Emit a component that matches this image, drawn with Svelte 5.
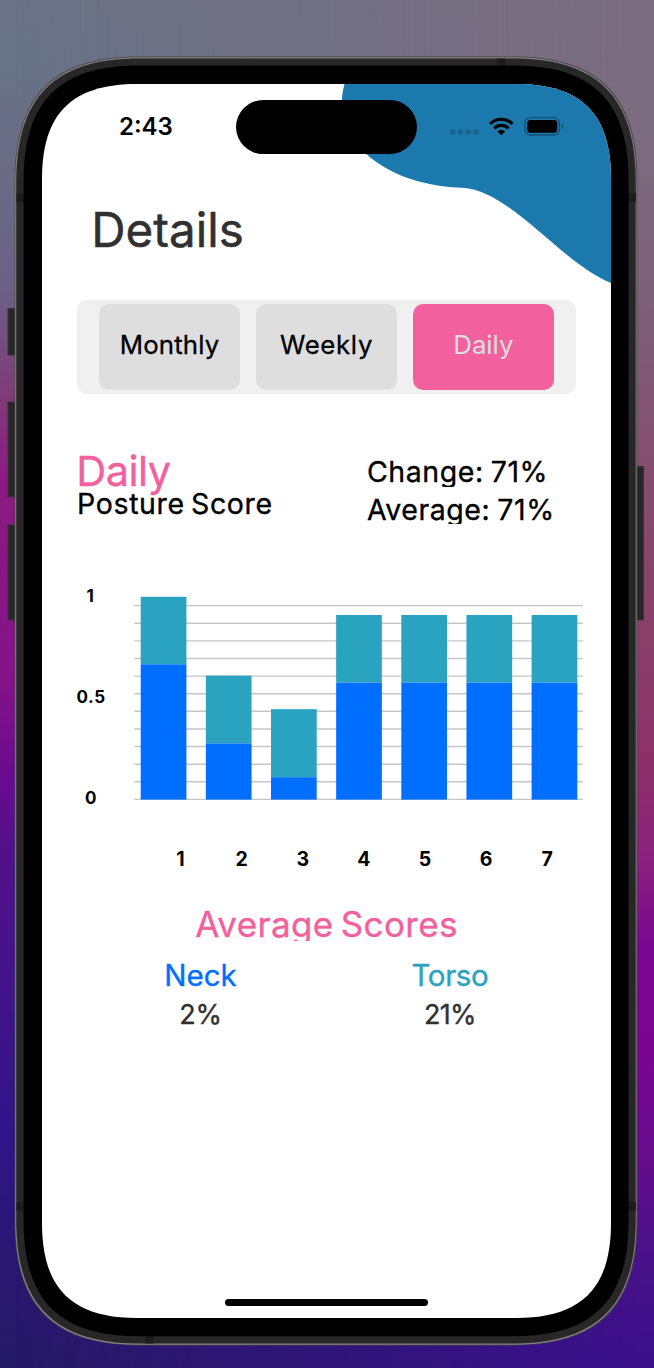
<script>
  const bars = [
    { top: 596.8, split: 664.3 },
    { top: 675.6, split: 743.4 },
    { top: 709.2, split: 777.2 },
    { top: 615, split: 682.6 },
    { top: 615, split: 682.6 },
    { top: 615, split: 682.6 },
    { top: 615, split: 682.6 }
  ];
  const lines = Array.from({ length: 12 }, (_, i) => 605.6 + i * 17.62);
  const tabs = ['Monthly', 'Weekly', 'Daily'];
  let active = $state('Daily');

  // Rounded rectangle with soft, continuous corners that span r pixels of each side.
  function squircle(x0, y0, x1, y1, r) {
    const h = 0.312 * r;
    return `M${x0 + r} ${y0}H${x1 - r}C${x1 - h} ${y0} ${x1} ${y0 + h} ${x1} ${y0 + r}` +
      `V${y1 - r}C${x1} ${y1 - h} ${x1 - h} ${y1} ${x1 - r} ${y1}` +
      `H${x0 + r}C${x0 + h} ${y1} ${x0} ${y1 - h} ${x0} ${y1 - r}` +
      `V${y0 + r}C${x0} ${y0 + h} ${x0 + h} ${y0} ${x0 + r} ${y0}Z`;
  }
</script>

<div class="stage">
  <svg class="device" width="654" height="1368" viewBox="0 0 654 1368" aria-hidden="true">
    <g fill="#272727" stroke="#3c3340" stroke-width="1">
      <rect x="8" y="308.500" width="10" height="46.500" />
      <rect x="8" y="402" width="10" height="95" />
      <rect x="8" y="525" width="10" height="95" />
      <rect x="634" y="466.500" width="9.500" height="153.500" />
    </g>
    <path d={squircle(14.6, 56.4, 637.4, 1345.4, 124)} fill="#44444a" />
    <path d={squircle(15.2, 57.2, 636.6, 1344.8, 124)} fill="#85817f" />
    <path d={squircle(16.3, 58.5, 635.7, 1343.5, 123)} fill="#272727" />
    <g fill="#1c1c1c">
      <rect x="16.500" y="193" width="8" height="9" />
      <rect x="628" y="193" width="8" height="9" />
      <rect x="16.500" y="1202" width="8" height="9" />
      <rect x="628" y="1202" width="8" height="9" />
      <rect x="497" y="58.500" width="9" height="8" />
      <rect x="145" y="1335" width="8.500" height="8.500" />
    </g>
    <path d={squircle(23.6, 65.6, 628.6, 1336.2, 115)} fill="#000" />
    <path d={squircle(42, 84, 611, 1318, 95)} fill="#fff" />
    <clipPath id="screen"><path d={squircle(42, 84, 611, 1318, 95)} /></clipPath>
    <path
      clip-path="url(#screen)"
      d="M344.500 84C337 112 345 135 366.300 154C392 177 427 186.500 463 187.800C511 191 560 262 611 283V84Z"
      fill="#1c79ad"
    />
  </svg>

  <main class="screen">
    <div class="status">
      <span class="time">2:43</span>
      <span class="island"></span>
      <svg class="dots" width="30" height="6" viewBox="0 0 30 6"><g fill="#176490"><rect x="0.300" y="0.500" width="5" height="5" rx="1.500" /><rect x="8.100" y="0.500" width="5" height="5" rx="1.500" /><rect x="15.800" y="0.500" width="5" height="5" rx="1.500" /><rect x="23.500" y="0.500" width="5" height="5" rx="1.500" /></g></svg>
      <svg class="wifi" width="26" height="20" viewBox="488 116 26 20"><g fill="none" stroke="#000" stroke-width="3.200"><path d="M490.100 123.900A15.800 15.800 0 0 1 512.500 123.900" /><path d="M494.200 128.300A10 10 0 0 1 508.400 128.300" /></g><path d="M501.300 135.200L497.500 131.400A5.300 5.300 0 0 1 505.100 131.400Z" /></svg>
      <svg class="battery" width="40" height="20" viewBox="524 116 40 20"><rect x="525" y="117.700" width="34.300" height="17.300" rx="5.200" fill="none" stroke="#125078" stroke-width="1.300" /><rect x="527.200" y="120" width="30" height="12.800" rx="3.400" /><path d="M561.700 123.800C564 124.800 564 127.800 561.700 128.800Z" fill="#125078" /></svg>
    </div>

    <h1>Details</h1>

    <div class="tabs">
      {#each tabs as tab}
        <button class:active={tab === active} class={tab.toLowerCase()} onclick={() => (active = tab)}>{tab}</button>
      {/each}
    </div>

    <section class="summary">
      <div>
        <h2>Daily</h2>
        <p class="sub">Posture Score</p>
      </div>
      <div class="stats">
        <p class="change">Change: 71%</p>
        <p class="average">Average: 71%</p>
      </div>
    </section>

    <svg class="chart" width="530" height="220" viewBox="60 590 530 220">
      {#each lines as y}
        <line x1="134.300" x2="583" y1={y} y2={y} stroke="#c6c6c6" stroke-width="1.400" />
      {/each}
      {#each bars as bar, i}
        <rect x={140.7 + i * 65.15} y={bar.top} width="45.700" height={bar.split - bar.top} fill="#29a3bf" />
        <rect x={140.7 + i * 65.15} y={bar.split} width="45.700" height={799.6 - bar.split} fill="#006fff" />
      {/each}
      <g class="ylabels" text-anchor="middle">
        <text x="90.500" y="601.900">1</text>
        <text x="91" y="703">0.5</text>
        <text x="91" y="804.300">0</text>
      </g>
    </svg>
    <div class="days">
      {#each bars as _, i}<span>{i + 1}</span>{/each}
    </div>

    <h3>Average Scores</h3>
    <div class="scores">
      <div class="neck"><strong>Neck</strong><span>2%</span></div>
      <div class="torso"><strong>Torso</strong><span>21%</span></div>
    </div>

    <div class="home"></div>
  </main>
</div>

<style>
  :global(body) { margin: 0; }
  .stage {
    position: relative;
    width: 654px;
    height: 1368px;
    box-sizing: border-box;
    padding: 84px 43px 50px 42px;
    overflow: hidden;
    font-family: Inter, "Liberation Sans", sans-serif;
    color: #000;
    background: linear-gradient(#6a7385 0, #687386 60px, #6a6c85 170px, #6b6085 290px, #7d3f77 385px, #8b1b80 480px, #86128a 680px, #6a0a90 775px, #50118b 860px, #43138a 980px, #2e1489 1140px, #281870 1270px, #251a66 1368px);
  }
  .stage::before {
    content: "";
    position: absolute;
    inset: 0;
    background: linear-gradient(#7a6c80 0, #7c6b7f 150px, #7d6078 300px, #845070 440px, #8a3f68 640px, #8e3068 760px, #8b207f 860px, #7a0590 950px, #7a0490 1050px, #650c8d 1160px, #4a1189 1250px, #38108a 1368px);
    mask-image: linear-gradient(to right, transparent 15px, #000 640px);
  }
  .device { position: absolute; left: 0; top: 0; }
  .screen {
    position: relative;
    height: 100%;
    box-sizing: border-box;
    padding: 16px 0 12px;
    display: flex;
    flex-direction: column;
  }
  h1, h2, h3, p { margin: 0; font-weight: 400; white-space: nowrap; -webkit-text-stroke: 0.35px currentColor; }

  .status { display: flex; align-items: center; height: 53.500px; flex: none; padding-left: 77px; }
  .time { width: 55px; font-size: 24px; font-weight: 600; white-space: nowrap; }
  .island { width: 181.500px; height: 53.500px; border-radius: 27px; background: #000; margin-left: 61.700px; }
  .dots { margin: 11px 0 0 32.800px; }
  .wifi { margin: 0 0 2px 8px; }
  .battery { margin: 0 0 2px 10px; }

  h1 { margin: 46.200px 0 0 49.300px; line-height: 60px; font-size: 47.500px; color: #303030; -webkit-text-stroke-width: 0.5px; }

  .tabs {
    display: flex;
    flex: none;
    gap: 15.700px;
    box-sizing: border-box;
    width: 499px;
    height: 94px;
    margin: 40.300px 0 0 35px;
    padding: 4px 22px;
    border-radius: 10px;
    background: #f0f0f0;
  }
  button {
    flex: 1;
    height: 86px;
    padding: 0 0 4px;
    border: 0;
    border-radius: 10px;
    background: #dedede;
    font: 400 25.800px Inter, "Liberation Sans", sans-serif;
    letter-spacing: 0.15px;
    color: #000;
    -webkit-text-stroke: 0.3px currentColor;
  }
  button.weekly { letter-spacing: 0.650px; }
  button.active { background: #f2619e; color: #dfdfdf; letter-spacing: 0; -webkit-text-stroke: 0; }

  .summary { display: flex; flex: none; height: 73.900px; margin: 56.600px 0 0 35px; }
  .summary > div:first-child { width: 290px; }
  h2 { font-size: 41.500px; line-height: 40px; color: #f2619e; letter-spacing: -0.5px; text-indent: -0.7px; }
  .sub { font-size: 28.500px; line-height: 26px; letter-spacing: 0.650px; word-spacing: -2.500px; }
  .stats { display: flex; flex-direction: column; gap: 7.500px; padding-top: 5.900px; }
  .stats p { font-size: 28.500px; line-height: 31.800px; height: 30.200px; overflow: hidden; letter-spacing: 0.550px; word-spacing: -1.500px; }

  .chart { flex: none; margin: 65.500px 0 0 18px; overflow: visible; }
  .ylabels { font-size: 17px; font-weight: 700; letter-spacing: 0.6px; }
  .days {
    display: grid;
    flex: none;
    grid-template-columns: repeat(7, 61.100px);
    margin: 36.600px 0 0 108px;
    font-size: 19.500px;
    line-height: 24px;
    font-weight: 700;
    text-align: center;
  }

  h3 {
    flex: none;
    width: 569px;
    height: 34.400px;
    margin-top: 36.500px;
    overflow: hidden;
    font-size: 35px;
    line-height: 34.400px;
    text-align: center;
    letter-spacing: 0.350px;
    word-spacing: -3px;
    color: #f2619e;
  }
  .scores { display: grid; flex: none; grid-template-columns: 249.500px 249.500px; margin: 16.300px 0 0 33.700px; }
  .scores div { display: flex; flex-direction: column; align-items: center; gap: 3px; -webkit-text-stroke: 0.35px currentColor; }
  strong { font-size: 29.500px; font-weight: 400; line-height: 35.400px; }
  .neck strong { color: #006fff; }
  .torso strong { color: #29a3bf; letter-spacing: -0.4px; }
  .scores span { font-size: 27px; line-height: 37px; color: #303030; letter-spacing: -0.3px; }
  .torso span { letter-spacing: -0.7px; }

  .home { width: 203px; height: 7px; flex: none; border-radius: 4px; background: #000; margin: auto 0 0 183.300px; }
</style>
